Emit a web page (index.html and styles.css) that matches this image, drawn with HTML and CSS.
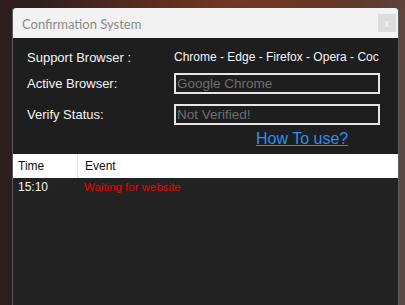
FILE: index.html
```html
<!DOCTYPE html>
<html lang="en">
<head>
    <meta charset="UTF-8">
    <title>Confirmation System</title>
    <link rel="stylesheet" href="styles.css">
</head>
<body>
    <div class="window">
        <div class="titlebar">
            <span class="title">Confirmation System</span>
            <button class="close-button" aria-label="Close">x</button>
        </div>
        <div class="content">
            <div class="form">
                <div class="row first">
                    <span class="label">Support Browser :</span>
                    <span class="value">Chrome - Edge - Firefox - Opera - Coc</span>
                </div>
                <div class="row">
                    <span class="label">Active Browser:</span>
                    <input class="field" type="text" placeholder="Google Chrome">
                </div>
                <div class="row">
                    <span class="label">Verify Status:</span>
                    <input class="field" type="text" placeholder="Not Verified!">
                </div>
                <div class="link-row">
                    <a href="#" class="help-link">How To use?</a>
                </div>
            </div>
            <div class="log">
                <div class="log-header">
                    <div class="col-time">Time</div>
                    <div class="col-event">Event</div>
                </div>
                <div class="log-row">
                    <div class="col-time">15:10</div>
                    <div class="col-event waiting">Waiting for website</div>
                </div>
            </div>
        </div>
    </div>
</body>
</html>
```

FILE: styles.css
```css
:root {
    --window-bg: #1e1e1e;
    --log-bg: #222222;
    --title-bg: #f2f2f2;
    --text-color: #f4f4f4;
    --field-text: #6e6e6e;
    --link-color: #2a8ff0;
}

body {
    margin: 0;
    height: 305px;
    overflow: hidden;
    font-family: 'Liberation Sans', Arial, sans-serif;
    background:
        radial-gradient(ellipse at 60% -10%, #7a3a24 0%, rgba(110, 50, 30, 0.6) 30%, transparent 60%),
        linear-gradient(90deg, #2e1d1d 0%, #3a2220 50%, #5a4a46 100%);
}

/* Window */
.window {
    margin: 8px 0 0 12px;
    width: 385px;
    height: 300px;
    border: 1px solid #5c5c5c;
    border-top: none;
    border-radius: 3px 3px 0 0;
    background-color: var(--window-bg);
    display: flex;
    flex-direction: column;
}

.content {
    flex: 1;
    display: flex;
    flex-direction: column;
}

.titlebar {
    height: 30px;
    background-color: var(--title-bg);
    border-radius: 3px 3px 0 0;
    display: flex;
    align-items: center;
    justify-content: space-between;
    padding: 0 2px 0 9px;
}

.title {
    font-family: 'Lato', sans-serif;
    font-size: 13px;
    color: #8a8a8a;
    margin-top: 1px;
}

.close-button {
    width: 18px;
    height: 18px;
    border: none;
    background-color: #dcdcdc;
    color: #f4f4f4;
    font-size: 10px;
    padding: 0;
}

/* Form */
.form {
    padding: 10px 0 0 14px;
}

.row {
    display: flex;
    align-items: center;
    height: 21px;
    margin-bottom: 10px;
}

.row.first {
    height: 18px;
    margin-bottom: 7px;
}

.label {
    width: 147px;
    font-size: 13px;
    color: var(--text-color);
}

.value {
    white-space: nowrap;
    font-size: 12px;
    color: var(--text-color);
}

.field {
    width: 200px;
    height: 17px;
    border: 2px solid #e6e6e6;
    background-color: var(--window-bg);
    color: var(--field-text);
    font-family: 'Liberation Sans', Arial, sans-serif;
    font-size: 13.5px;
    padding: 0 1px;
    margin: 0;
    outline: none;
}

.field::placeholder {
    color: var(--field-text);
}

.link-row {
    padding-left: 229px;
    margin-top: -5px;
    height: 20px;
}

.help-link {
    font-size: 16px;
    color: var(--link-color);
}

/* Log table */
.log {
    flex: 1;
    background-color: var(--log-bg);
    margin-top: 4px;
    font-size: 12px;
}

.log-header {
    display: flex;
    height: 24px;
    align-items: center;
    background-color: #ffffff;
    color: #111111;
}

.log-header .col-time {
    border-right: 1px solid #e3e3e3;
}

.col-time {
    width: 59px;
    padding-left: 5px;
    height: 100%;
    display: flex;
    align-items: center;
}

.col-event {
    padding-left: 7px;
}

.log-row {
    display: flex;
    height: 18px;
    align-items: center;
    color: var(--text-color);
}

.waiting {
    color: #f00000;
    font-size: 11.5px;
}
```
